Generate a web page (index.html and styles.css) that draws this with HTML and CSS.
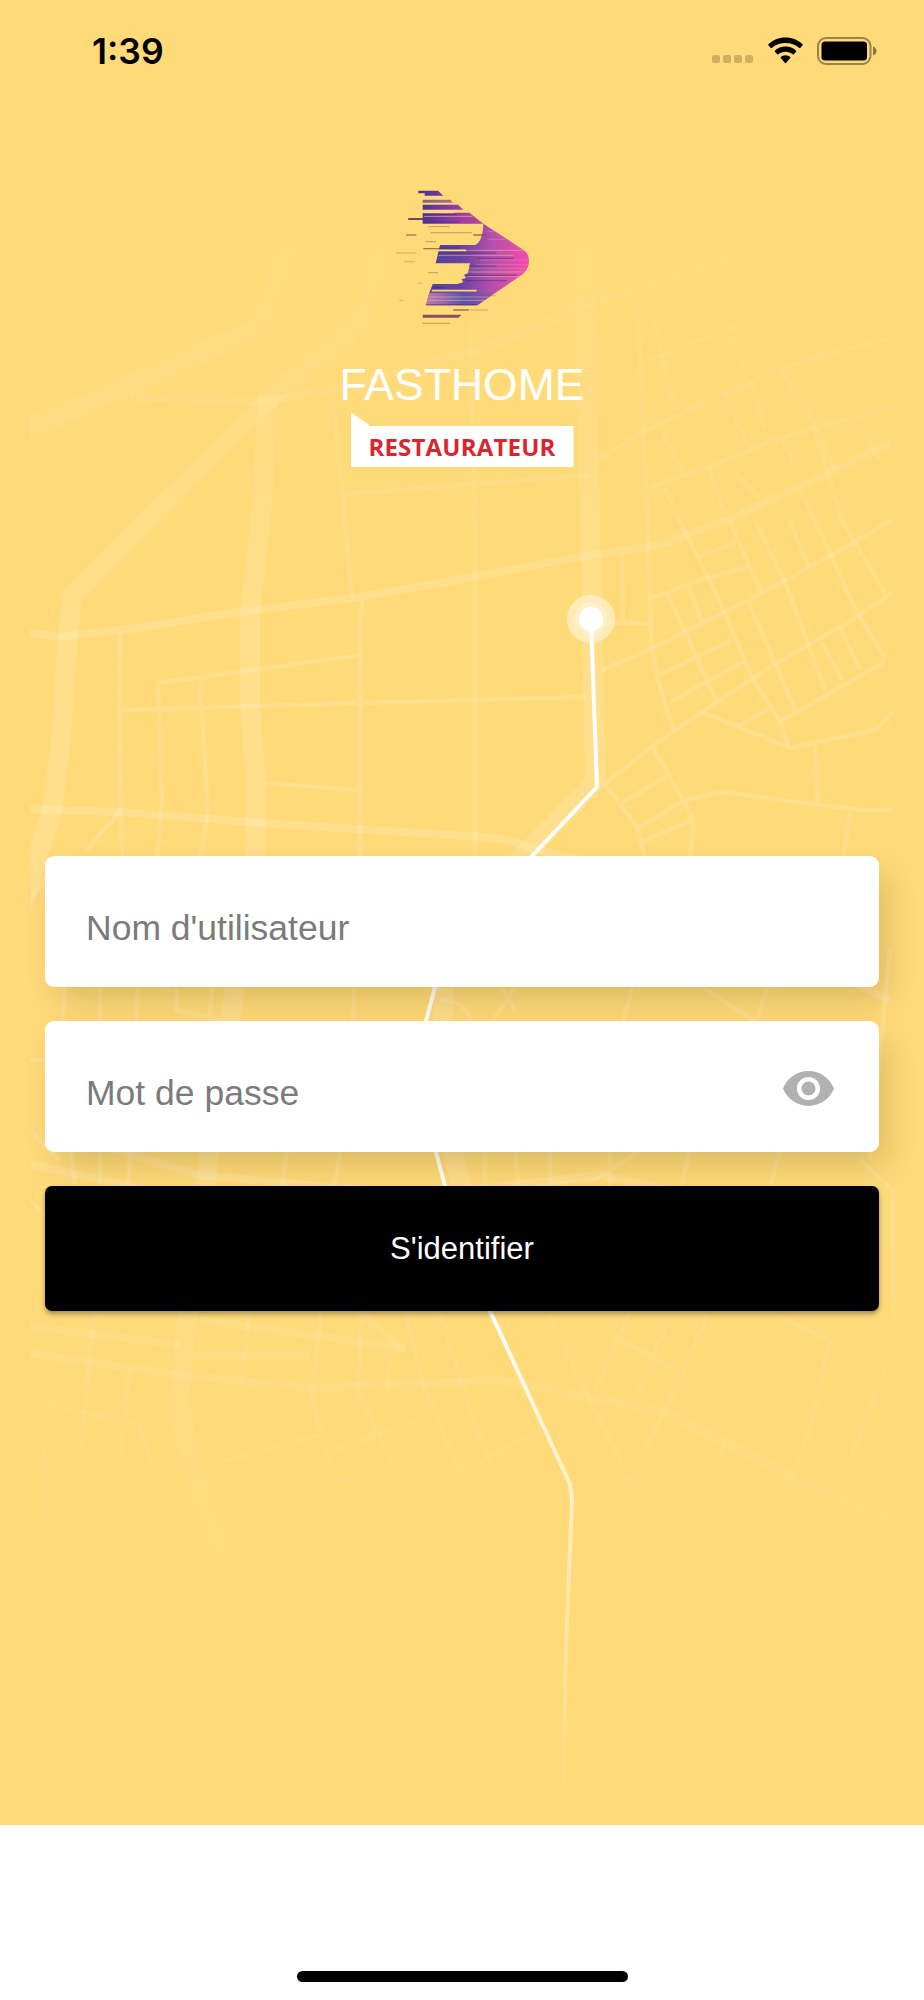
FILE: index.html
```html
<!DOCTYPE html>
<html lang="fr">
<head>
<meta charset="UTF-8" />
<meta name="viewport" content="width=device-width, initial-scale=1" />
<title>FastHome Restaurateur</title>
<link rel="stylesheet" href="styles.css">
</head>
<body>

<div class="screen">
  <!-- map -->
  <svg class="map" viewBox="0 0 924 1825" fill="none" stroke="#fff" stroke-linejoin="round">
    <defs>
      <linearGradient id="fade" x1="0" y1="0" x2="0" y2="1">
        <stop offset="0.09" stop-color="#000" />
        <stop offset="0.2" stop-color="#777" />
        <stop offset="0.34" stop-color="#fff" />
        <stop offset="0.62" stop-color="#fff" />
        <stop offset="0.76" stop-color="#888" />
        <stop offset="0.9" stop-color="#000" />
      </linearGradient>
      <linearGradient id="routeFade" gradientUnits="userSpaceOnUse" x1="0" y1="1320" x2="0" y2="1810">
        <stop offset="0" stop-color="#fff" />
        <stop offset="0.35" stop-color="#fff" stop-opacity="0.55" />
        <stop offset="1" stop-color="#fff" stop-opacity="0" />
      </linearGradient>
      <mask id="mapMask" maskUnits="userSpaceOnUse" x="30" y="0" width="865" height="1825">
        <rect x="30" y="0" width="865" height="1825" fill="url(#fade)" stroke="none" />
      </mask>
    </defs>
    <g mask="url(#mapMask)">
      <g class="road-wide">
        <path d="M322 190L290 240L265 310Q255 332 230 340L130 385L20 432" />
        <path d="M395 190L372 285Q365 320 340 340L270 398L72 595L67 650L60 750L52 812L36 860L20 910" />
        <path d="M268 395L261 520L250 610V700L256 790L255 860L235 990L207 1170L187 1320L179 1400L191 1468L236 1593L250 1650" />
        <path d="M582 190L590 520L595 782L500 880L445 960L440 1100L470 1220L500 1311" />
      </g>
      <g class="road-medium">
        <path d="M130 397L265 402L340 388L480 350L600 300L740 255" />
        <path d="M20 632L60 637L130 629L240 612L360 597L462 579L580 557L660 545L740 515L890 443" />
        <path d="M20 809L120 812L290 825L470 836Q510 838 530 848L620 870L890 1000" />
        <path d="M20 1162L130 1186L260 1230L405 1350" />
        <path d="M20 1325L180 1345M20 1352L180 1375L310 1388L500 1380L550 1390L665 1412L720 1440L830 1495L890 1520" />
        <path d="M100 1145L200 1175L420 1195L600 1175L760 1210" />
        <path d="M200 1320L405 1348M195 1355H310" />
      </g>
      <g class="road-small">
        <path d="M333 400L345 520L352 598M345 494L590 475M469 300L475 520V860" />
        <path d="M120 633L119 710L122 860M120 710L362 703L586 697M157 860L162 800L158 683L360 655M200 681L208 815L200 860M362 600L360 655V860M265 783L358 790M85 852L119 812" />
        <path d="M622 553L623 623M592 623H650M638 300L642 413L649 545L651 640L658 680L673 730" />
        <path d="M604 785L650 748L702 712L770 667L852 620L892 593M602 670L655 647L725 612L782 582L832 555L892 520M652 598L699 580L749 567" />
        <path d="M596 460L652 427L725 393L802 362L892 337M650 487L709 467L782 437L892 407M649 360L725 330L795 307" />
        <path d="M702 712L790 748L875 730L893 712M815 745L818 805M605 785L638 828L645 860M653 748L683 800L693 820L690 860M622 803L668 775M638 828L685 800L722 792L860 810H893M641 842L692 820M850 812L843 860" />
        <path d="M679 520L707 575L725 613L752 677L779 720L789 747M667 593L685 632L717 702M688 586L702 622M659 675L732 640M670 702L747 660" />
        <path d="M729 520L762 593M749 603L775 663L795 710M755 520L787 587L825 690M789 520L809 567M815 520L857 613L885 657M842 520L885 593M822 643L842 680M840 628L860 670M779 722L885 662M738 726L768 709M699 557L735 543" />
        <path d="M652 313L675 410M662 433L682 473M665 487L679 520M729 337L745 367M725 393L749 447M709 467L725 513M749 380L765 427M782 370L812 420L842 520M735 473L759 497M782 437L795 465M815 427L835 470M800 490L815 520M860 425L880 460" />
        <path d="M100 860V1180L95 1311L80 1450M65 980L60 1060L75 1186M138 985L132 1130L125 1220M180 860L176 1010L222 1020M355 970L350 1100L333 1190L312 1400L325 1450L350 1510M212 985L200 1140" />
        <path d="M290 1130L280 1200M362 1320L358 1390L395 1470M390 1350L388 1390M405 1310L425 1390L460 1470M440 1311L470 1410L495 1480M250 1311L240 1380M130 1368L120 1460M30 1400L140 1425L155 1480" />
        <path d="M440 1000Q470 1000 472 1030M500 985L515 1010M520 980L490 1025M635 980L620 1030M700 985L760 1025M770 980L755 1025M890 950L885 1000L870 1160" />
        <path d="M485 1150V1190M515 1150L520 1200M550 1150V1186M610 1150V1186M690 1150L680 1190M780 1150L770 1186M640 1150L595 1180L540 1186" />
        <path d="M550 1315L590 1400L640 1500M630 1311L595 1390M668 1320L635 1400M708 1315L670 1400L645 1450M620 1340L685 1375M780 1318L830 1340L810 1430L785 1500M885 1370L850 1460M725 1440L695 1530" />
        <path d="M210 1465L320 1435M335 1450L435 1415M230 1510L345 1480L460 1472L540 1430M380 1550L530 1500L640 1475M45 1450V1520H180" />
        <path d="M30 900L60 860M30 1060H90M30 1130L60 1160M860 1160L893 1190V1320M30 1200L60 1230L55 1311" />
      </g>
    </g>
    <path class="route" stroke="url(#routeFade)" d="M591 619L597 787L532 856L450 950Q436 975 435 987L426 1021L425 1090L436 1152L445 1186L490 1311L570 1484L572 1501L566 1647L563 1810" />
    <circle cx="591" cy="619" r="24" fill="#fff" fill-opacity="0.45" stroke="none" />
    <circle cx="591" cy="619" r="16" fill="#fff" fill-opacity="0.25" stroke="none" />
    <circle cx="591" cy="619" r="12" fill="#fff" stroke="none" />
  </svg>

  <header class="status-bar">
    <span class="time">1:39</span>
    <div class="status-icons">
      <span class="dots"><i></i><i></i><i></i><i></i></span>
      <svg class="wifi" viewBox="0 0 35 27">
        <path d="M17.5 0.5C10.800 0.500 4.700 3 0.400 7.200Q0 7.700 0.400 8.200L2.800 10.900Q3.300 11.300 3.800 10.900C7.400 7.600 12.200 5.900 17.500 5.900S27.600 7.600 31.200 10.900Q31.700 11.300 32.200 10.900L34.600 8.200Q35 7.700 34.600 7.200C30.300 3 24.200 0.500 17.500 0.500Z" />
        <path d="M17.500 9.600C13.400 9.600 9.700 11.100 6.900 13.700Q6.500 14.200 6.900 14.700L9.200 17.300Q9.700 17.700 10.200 17.300C12.200 15.700 14.600 14.800 17.500 14.800S22.800 15.700 24.800 17.300Q25.300 17.700 25.800 17.300L28.100 14.700Q28.500 14.200 28.100 13.700C25.300 11.100 21.600 9.600 17.500 9.600Z" />
        <path d="M17.500 18.300C15.700 18.300 14 19 12.800 20.100Q12.400 20.600 12.800 21.100L17 25.900Q17.500 26.400 18 25.900L22.200 21.100Q22.600 20.600 22.200 20.100C21 19 19.300 18.300 17.500 18.300Z" />
      </svg>
      <svg class="battery" viewBox="0 0 60 28">
        <rect x="1" y="1" width="52.500" height="26" rx="8" fill="none" stroke="#000" stroke-opacity="0.4" stroke-width="2" />
        <rect x="4.500" y="4.500" width="45.500" height="19" rx="3.500" />
        <path d="M56 9.500Q59.500 11 59.500 14T56 18.500Z" fill-opacity="0.45" />
      </svg>
    </div>
  </header>

  <div class="brand">
    <svg class="logo" viewBox="0 0 480 450">
      <defs>
        <linearGradient id="arrow" gradientUnits="userSpaceOnUse" x1="130" y1="0" x2="447" y2="0">
          <stop offset="0" stop-color="#4a4495" />
          <stop offset="0.35" stop-color="#6742a0" />
          <stop offset="0.65" stop-color="#b550ac" />
          <stop offset="1" stop-color="#f74bad" />
        </linearGradient>
        <linearGradient id="bars" gradientUnits="userSpaceOnUse" x1="128" y1="0" x2="310" y2="0">
          <stop offset="0" stop-color="#4c3590" />
          <stop offset="0.5" stop-color="#8f3aa3" />
          <stop offset="1" stop-color="#bc4590" />
        </linearGradient>
        <linearGradient id="tail" gradientUnits="userSpaceOnUse" x1="138" y1="0" x2="400" y2="0">
          <stop offset="0" stop-color="#c27aa5" />
          <stop offset="0.45" stop-color="#5952a9" />
          <stop offset="0.75" stop-color="#8d559f" stop-opacity="0.7" />
          <stop offset="1" stop-color="#d05aa5" stop-opacity="0" />
        </linearGradient>
      </defs>
      <g fill="url(#bars)">
        <path d="M115 32H174L190 47H134V40H115Z" />
        <path d="M128 59H212L218 68H128Z" opacity="0.7" />
        <path d="M128 74H234L250 89H128Z" />
        <path d="M128 100H220L225 98H268L310 131H128V120H85V114H128Z" />
      </g>
      <path fill="url(#arrow)" d="M310 131L434 212Q447 222 447 243Q447 263 432 280L292 376H138L148 338L158 312H232L250 307L244 298L258 294L252 284L264 280L270 250H167L180 195H285Q308 185 310 131Z" />
      <path fill="url(#tail)" d="M148 338H345L292 376H138Z" />
      <g stroke="#e8b0a8" stroke-width="3" fill="none">
        <path d="M132 109H278" stroke-opacity="0.7" />
        <path d="M170 211H432M175 226H400M267 276H434M262 290H416" stroke-opacity="0.6" />
        <path d="M300 240H446M290 254H446M265 265H440M325 178H380M320 155H345" stroke-opacity="0.3" />
        <path d="M145 351H325M143 361H315" stroke-opacity="0.6" />
      </g>
      <g stroke="#ffd978" stroke-width="5" fill="none">
        <path d="M165 211H258M155 332H290" />
      </g>
      <g stroke="#3a2760" stroke-width="3" fill="none" stroke-opacity="0.5">
        <path d="M174 219H350M180 204H240M267 258H350M262 286H410M258 302H380M158 323H195M290 235H400M138 374H290M130 104H230M135 126H240" />
      </g>
      <g stroke="#8d583f" stroke-width="4" fill="none">
        <path d="M130 206H180M280 165H320M220 390H267" stroke-opacity="0.8" />
        <path d="M78 165H109M85 117H128" stroke-opacity="0.7" />
        <path d="M145 140H208M152 158H275M137 185H168M145 278H175M128 430H210" stroke-opacity="0.4" />
        <path d="M48 219H109M72 245H105M112 310H128M58 361H70M270 390H325M300 347H348" stroke-opacity="0.25" />
      </g>
      <path fill="#87515d" d="M128 404H244L236 413H128Z" />
    </svg>
    <h1 class="title">FASTHOME</h1>
    <div class="tag">RESTAURATEUR</div>
  </div>

  <form class="login">
    <div class="field">
      <input type="text" placeholder="Nom d'utilisateur" autocomplete="off" />
    </div>
    <div class="field">
      <input type="password" placeholder="Mot de passe" />
      <svg class="eye" viewBox="1 4.500 22 15">
        <path d="M12 4.500C7 4.500 2.730 7.610 1 12c1.730 4.390 6 7.500 11 7.500s9.270-3.110 11-7.500c-1.730-4.390-6-7.500-11-7.500zM12 17c-2.760 0-5-2.240-5-5s2.240-5 5-5 5 2.240 5 5-2.240 5-5 5zm0-8c-1.660 0-3 1.340-3 3s1.340 3 3 3 3-1.340 3-3-1.340-3-3-3z" />
      </svg>
    </div>
    <button type="button" class="submit">S'identifier</button>
  </form>
</div>

<footer class="home-bar"><span></span></footer>

</body>
</html>
```
FILE: styles.css
```css
* {
  box-sizing: border-box;
}
body {
  margin: 0;
  width: 924px;
  height: 2000px;
  background: #fff;
  font-family: "Liberation Sans", Arial, sans-serif;
  overflow: hidden;
}
.screen {
  position: relative;
  height: 1825px;
  background: #ffda79;
}
.map {
  position: absolute;
  top: 0;
  left: 0;
  width: 924px;
  height: 1825px;
}
.road-wide {
  stroke-width: 20px;
  stroke-opacity: 0.14;
}
.road-medium {
  stroke-width: 8px;
  stroke-opacity: 0.15;
}
.road-small {
  stroke-width: 4.5px;
  stroke-opacity: 0.14;
}
.route {
  stroke-width: 4px;
}
.status-bar,
.brand,
.login {
  position: relative;
}
.status-bar {
  display: flex;
  justify-content: space-between;
  align-items: center;
  height: 102px;
  padding: 0 47px 0 92px;
}
.time {
  font-family: Inter, sans-serif;
  font-size: 35.5px;
  font-weight: 600;
}
.status-icons {
  display: flex;
  align-items: center;
}
.dots {
  display: flex;
  gap: 3px;
  margin: 16px 15px 0 0;
}
.dots i {
  width: 8px;
  height: 8px;
  border-radius: 2px;
  background: #cfae60;
}
.wifi {
  width: 35px;
  height: 27px;
  margin: 0 14px 2px 0;
}
.battery {
  width: 60px;
  height: 28px;
  margin-bottom: 1px;
}
.brand {
  display: flex;
  flex-direction: column;
  align-items: center;
  height: 754px;
  padding-top: 78px;
}
.logo {
  width: 160px;
  height: 150px;
  margin-right: 4px;
}
.title {
  margin: 29px 0 0;
  color: #fff;
  font-size: 44.5px;
  font-weight: 400;
  line-height: 51px;
}
.tag {
  width: 223px;
  height: 55px;
  margin-top: 2px;
  padding-top: 14px;
  background: #fff;
  clip-path: polygon(0 0, 20px 14px, 100% 14px, 100% 100%, 0 100%);
  color: #d9262e;
  font-family: "Open Sans", sans-serif;
  font-size: 24px;
  font-weight: 700;
  letter-spacing: 0.2px;
  line-height: 42px;
  text-align: center;
}
.login {
  display: flex;
  flex-direction: column;
  gap: 34px;
  padding: 0 45px;
}
.field {
  display: flex;
  align-items: center;
  height: 131px;
  padding: 0 45px 0 41px;
  background: #fff;
  border-radius: 9px;
  box-shadow: 10px 16px 32px -4px rgba(100, 75, 20, 0.24);
}
.field input {
  flex: 1;
  min-width: 0;
  padding: 13px 0 0;
  border: none;
  outline: none;
  background: none;
  font-family: inherit;
  font-size: 35.5px;
  color: #333;
}
.field input::placeholder {
  color: #7b7b7b;
}
.eye {
  width: 51px;
  height: 35px;
  margin-top: 4px;
  fill: #b1b1b1;
}
.submit {
  height: 125px;
  border: none;
  border-radius: 7px;
  background: #000;
  box-shadow: 0 3px 5px rgba(0, 0, 0, 0.35);
  color: #fff;
  font-family: inherit;
  font-size: 31px;
}
.home-bar {
  display: flex;
  justify-content: center;
  align-items: flex-end;
  height: 175px;
  padding-bottom: 18px;
}
.home-bar span {
  width: 331px;
  height: 11px;
  border-radius: 6px;
  background: #000;
}
```
